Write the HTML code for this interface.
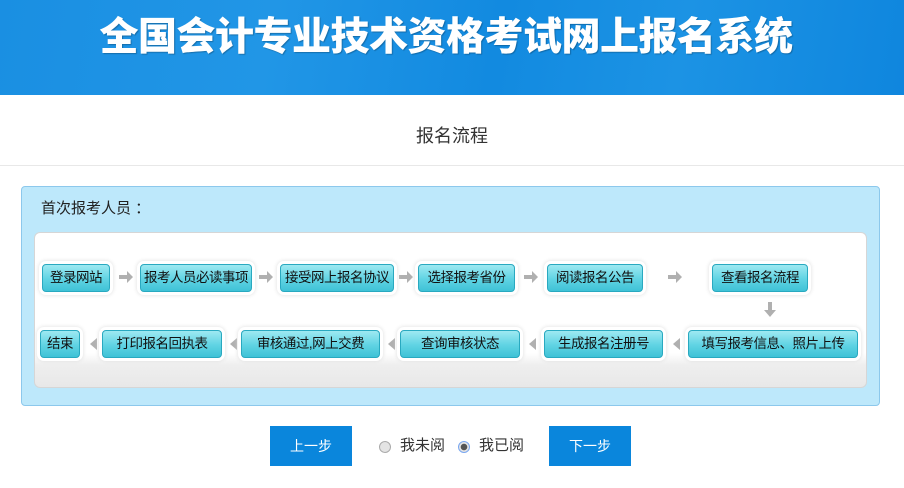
<!DOCTYPE html>
<html><head><meta charset="utf-8"><style>
*{margin:0;padding:0;box-sizing:border-box}
body{width:904px;height:488px;background:#fff;font-family:"Liberation Sans","Noto Sans CJK SC",sans-serif;position:relative;overflow:hidden}
.hdr{position:absolute;left:0;top:0;width:904px;height:95px;background:linear-gradient(100deg,#1a8fe2 0%,#2196e6 30%,#128ae0 55%,#1c93e4 75%,#0f86de 100%)}
.hdr h1{position:absolute;left:-6px;width:904px;top:6px;text-align:center;color:#fff;font-size:39px;font-weight:900;letter-spacing:-0.5px;text-shadow:1px 1px 1px rgba(0,0,0,.25);white-space:nowrap}
.sub{position:absolute;top:122px;width:904px;text-align:center;font-size:18px;color:#333}
.line{position:absolute;top:165px;left:0;width:904px;height:1px;background:#e8e8e8}
.outer{position:absolute;left:21px;top:186px;width:859px;height:220px;background:#bde8fb;border:1px solid #8cc8ec;border-radius:4px}
.title{position:absolute;left:41px;top:197px;font-size:15px;color:#222}
.inner{position:absolute;left:34px;top:232px;width:833px;height:156px;background:linear-gradient(#fff 0%,#fff 78%,#eeeeee 86%,#e8e8e8 100%);border:1px solid #d6d6d6;border-radius:6px}
.b{position:absolute;height:28px;line-height:26px;font-size:13.5px;color:#111;text-align:center;white-space:nowrap;overflow:hidden;letter-spacing:-0.5px;background:linear-gradient(#9ee9f2,#5fd3e3 55%,#3fc2d6);border:1px solid #29a9c0;border-radius:4px;box-shadow:0 0 0 3px #fff,0 0 4px 3px #ddd}
.btn{position:absolute;top:426px;width:82px;height:40px;background:#0a86dc;color:#fff;font-size:14px;line-height:40px;text-align:center}
.r{position:absolute;top:434px;font-size:15px;color:#333}
.rd{position:absolute;top:441px;width:12px;height:12px;border-radius:50%;border:1px solid #aaa;background:#e4e4e4}
</style></head><body>
<div class="hdr"><h1>全国会计专业技术资格考试网上报名系统</h1></div>
<div class="sub">报名流程</div>
<div class="line"></div>
<div class="outer"></div>
<div class="title">首次报考人员 ：</div>
<div class="inner"></div>

<svg width="904" height="488" style="position:absolute;left:0;top:0">
<g fill="#b0b0b0">
<path d="M119 275h8v-4l6 6-6 6v-4h-8z"/>
<path d="M259 275h8v-4l6 6-6 6v-4h-8z"/>
<path d="M399 275h8v-4l6 6-6 6v-4h-8z"/>
<path d="M524 275h8v-4l6 6-6 6v-4h-8z"/>
<path d="M668 275h8v-4l6 6-6 6v-4h-8z"/>
<path d="M768 302h4v8h4l-6 7-6-7h4z"/>
<path d="M90 344l7-6v12z"/>
<path d="M230 344l7-6v12z"/>
<path d="M388 344l7-6v12z"/>
<path d="M529 344l7-6v12z"/>
<path d="M673 344l7-6v12z"/>
</g>
</svg>

<div class="b" style="left:42px;top:264px;width:68px">登录网站</div>
<div class="b" style="left:140px;top:264px;width:112px">报考人员必读事项</div>
<div class="b" style="left:280px;top:264px;width:114px">接受网上报名协议</div>
<div class="b" style="left:418px;top:264px;width:97px">选择报考省份</div>
<div class="b" style="left:547px;top:264px;width:96px">阅读报名公告</div>
<div class="b" style="left:712px;top:264px;width:96px">查看报名流程</div>

<div class="b" style="left:40px;top:330px;width:40px">结束</div>
<div class="b" style="left:102px;top:330px;width:120px">打印报名回执表</div>
<div class="b" style="left:241px;top:330px;width:139px">审核通过,网上交费</div>
<div class="b" style="left:400px;top:330px;width:120px">查询审核状态</div>
<div class="b" style="left:544px;top:330px;width:119px">生成报名注册号</div>
<div class="b" style="left:688px;top:330px;width:170px">填写报考信息、照片上传</div>

<div class="btn" style="left:270px">上一步</div>
<div class="rd" style="left:379px"></div>
<div class="r" style="left:400px">我未阅</div>
<div class="rd" style="left:458px;border-color:#7aa7f0;background:radial-gradient(#555 0 3px,#e4e4e4 3.5px)"></div>
<div class="r" style="left:479px">我已阅</div>
<div class="btn" style="left:549px">下一步</div>
</body></html>
